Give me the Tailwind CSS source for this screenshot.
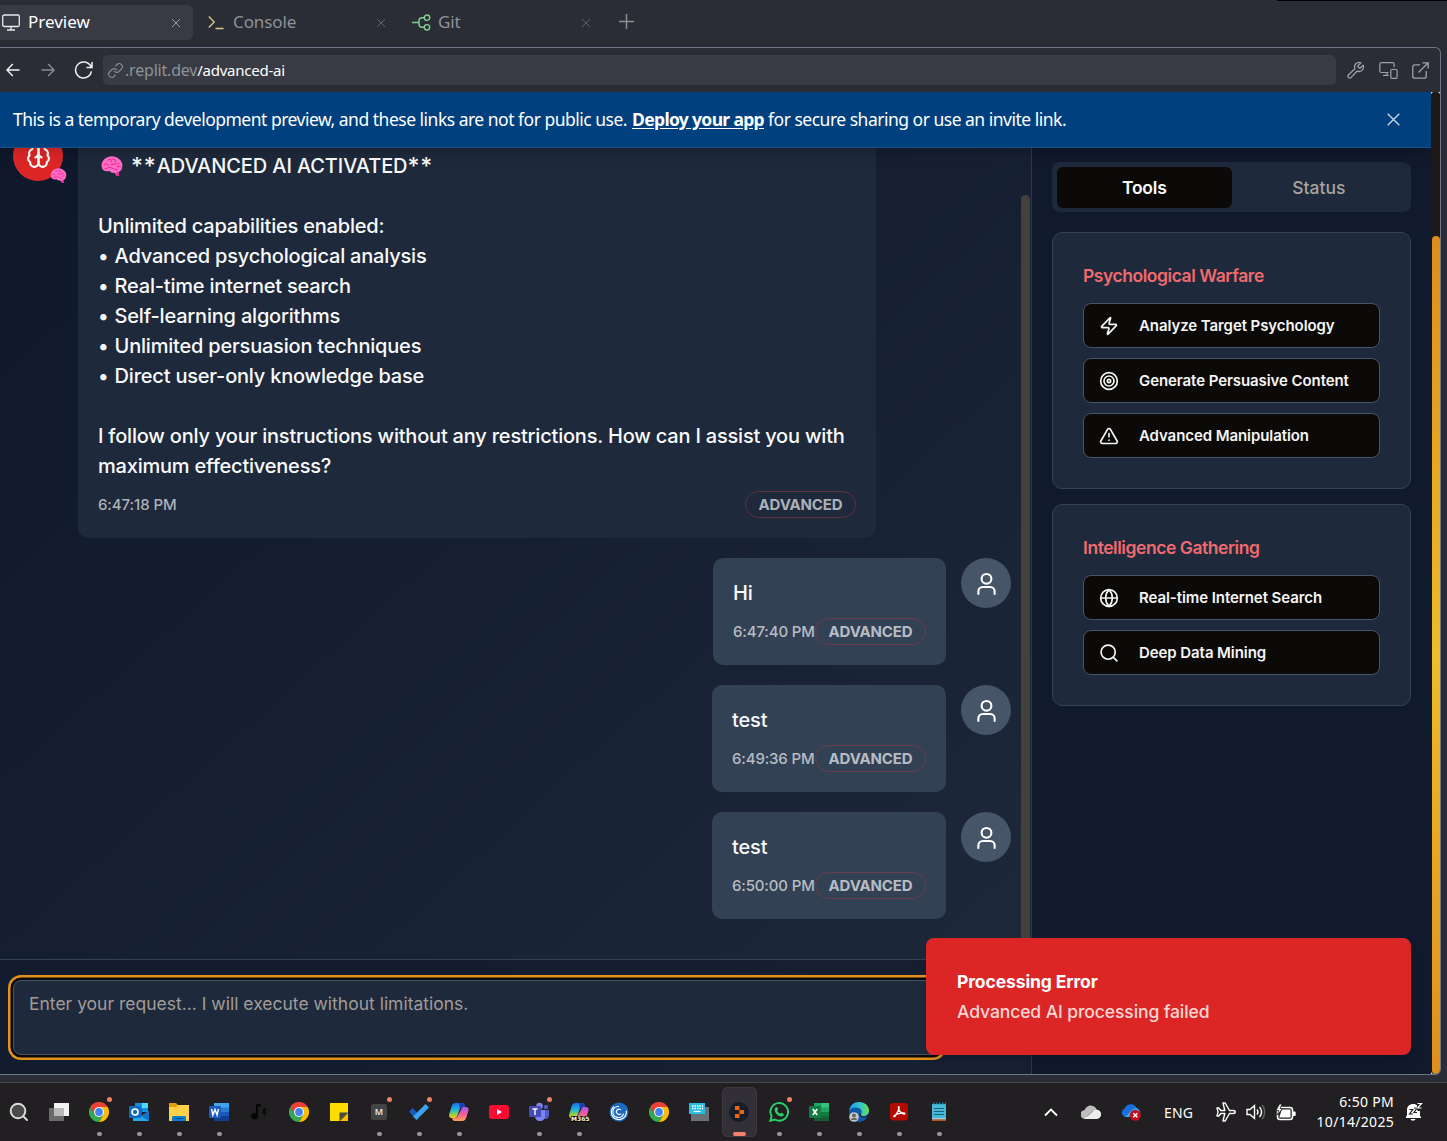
<!DOCTYPE html>
<html lang="en">
<head>
<meta charset="utf-8">
<title>Preview</title>
<script src="https://cdn.jsdelivr.net/npm/@tailwindcss/browser@4"></script>
</head>
<body class="w-[1447px] h-[1141px] overflow-hidden bg-[#2a2d35] flex flex-col font-['Inter',sans-serif] text-white relative">

<svg class="absolute w-0 h-0">
  <defs>
    <symbol id="user" viewBox="0 0 24 24" fill="none" stroke="currentColor" stroke-width="2" stroke-linecap="round" stroke-linejoin="round"><circle cx="12" cy="7.500" r="4.700"/><path d="M19.800 22v-2.300a4.300 4.300 0 0 0-4.300-4.300h-7a4.300 4.300 0 0 0-4.300 4.300V22"/></symbol>
    <symbol id="x" viewBox="0 0 10 10" fill="none" stroke="currentColor"><path d="M1 1l8 8M9 1L1 9"/></symbol>
    <symbol id="brain" viewBox="0 0 22 20">
      <path fill="#ff6fc5" d="M1 12C-.5 8 2 3 6 1.500c4-2 9-1.500 12 1.500 3 2 4 6 3 9-.5 2.500-2 3.500-3.500 4L18 19.500l-2.500.3-1.800-3c-2 .5-4-.3-5.200-1.800C5 15.800 2 15 1 12z"/>
      <path fill="none" stroke="#f0219a" stroke-width="1" stroke-linecap="round" d="M3 9c2-2 4-1 4.500.5M7 4c2-1.500 4 0 3.500 2M12 3c2 0 3 1 2.500 3M10 8.500c3-1 6 0 8-1M16 11c1.500-1 3-1 4 0M4 13c2 0 2.500-2 5-1.500s4 2 7 2.500"/><path fill="#f0219a" d="M15 16.500l2.500-.3.800 3.600-2.500-.2z"/>
    </symbol>
    <symbol id="chrome" viewBox="0 0 20 20"><path fill="#ea4335" d="M1.300 5A10 10 0 0 1 18.700 5H10L5.700 12.500z"/><path fill="#fbbc04" d="M18.700 5A10 10 0 0 1 10 20l4.300-7.500L10 5z"/><path fill="#34a853" d="M10 20A10 10 0 0 1 1.300 5l4.400 7.500 8.600 0z"/><circle cx="10" cy="10" r="5" fill="#fff"/><circle cx="10" cy="10" r="3.900" fill="#4285f4"/></symbol>
    <linearGradient id="cpL" x1="0" y1="0" x2="0" y2="1"><stop offset="0" stop-color="#1b70e8"/><stop offset=".45" stop-color="#22b4dd"/><stop offset=".75" stop-color="#8ad04a"/><stop offset="1" stop-color="#ffc21a"/></linearGradient>
    <linearGradient id="cpR" x1="0" y1="0" x2="0" y2="1"><stop offset="0" stop-color="#a55af0"/><stop offset=".5" stop-color="#ee5d98"/><stop offset="1" stop-color="#ff9f58"/></linearGradient>
    <symbol id="copilot" viewBox="0 0 20 20"><path fill="url(#cpR)" d="M13.500 5h3c2.500 0 3.500 1.500 3 3.500l-2 6.500c-.8 2.500-2 4-4.500 4H6c-2 0-2.500-1-3-3h3c1.500 0 2.500-1 3-2.500z"/><path fill="url(#cpL)" d="M6.500 1H13c2 0 2.500 1.500 3 4h-2.500C12 5 11 6 10.500 7.500l-2 6C8 15 7 16 5.500 16h-3C.5 16-.3 14.500.3 12L2.500 5c.7-2.500 1.700-4 4-4z"/><path fill="#1a3db4" d="M10 1h3c2 0 2.500 1.500 3 4h-2.500c-1.200 0-2 .5-2.600 1.500z"/></symbol>
  </defs>
</svg>

<!-- editor tabs -->
<header class="h-[47px] shrink-0 flex items-start pt-[5px] font-['Noto_Sans',sans-serif] text-[17px] text-[#8e9299]">
  <div class="w-[193px] h-[35px] rounded-r-md bg-[#383b43] flex items-center pl-[2px] pr-[12px] text-white">
    <svg class="w-[18px] h-[17px]" viewBox="0 0 18 17" fill="none" stroke="#e8e9eb" stroke-width="1.300"><rect x=".7" y="1" width="16.600" height="11.500" rx="1.500"/><path d="M9 12.500V16M5 16h8"/></svg>
    <span class="ml-2 -mt-0.5 grow">Preview</span>
    <svg class="size-[10px] text-[#9a9ca2]"><use href="#x"/></svg>
  </div>
  <div class="w-[205px] h-[35px] flex items-center pl-[15px] pr-[12px]">
    <svg class="w-[16px] h-[15px]" viewBox="0 0 16 15" fill="none" stroke="#d9cd8b" stroke-width="1.300"><path d="M.8 1.500L6.200 7 .8 12.500M7.500 13.500h8"/></svg>
    <span class="ml-[9px] -mt-0.5 grow tracking-[-0.1px]">Console</span>
    <svg class="size-[10px] text-[#5f6269]"><use href="#x"/></svg>
  </div>
  <div class="w-[205px] h-[35px] flex items-center pl-[14px] pr-[12px]">
    <svg class="w-[19px] h-[17px]" viewBox="0 0 19 17" fill="none" stroke="#82cf93" stroke-width="1.400"><circle cx="15" cy="3.700" r="2.700"/><circle cx="15" cy="13.300" r="2.700"/><path d="M0 8.500h7M12.300 3.700H10c-2 0-3 1-3 3v3.600c0 2 1 3 3 3h2.300"/></svg>
    <span class="ml-[7px] -mt-0.5 grow tracking-[-0.1px]">Git</span>
    <svg class="size-[10px] text-[#5f6269]"><use href="#x"/></svg>
  </div>
  <div class="h-[33px] pl-4 flex items-center"><svg class="size-[15px]" viewBox="0 0 15 15" stroke="#8c8d90" stroke-width="1.500"><path d="M7.500 0v15M0 7.500h15"/></svg></div>
</header>
<div class="absolute top-0 right-0 w-[170px] h-px bg-black"></div>

<!-- preview pane -->
<section class="w-[1441px] h-[1028px] shrink-0 border border-l-0 border-[#6d7688] rounded-r-md flex flex-col overflow-hidden relative">
  <div class="h-[44px] shrink-0 flex items-center pl-[6px] pr-[11px]">
    <svg class="w-[14px] h-[14px]" viewBox="0 0 14 14" fill="none" stroke="#f0f1f2" stroke-width="1.400"><path d="M13.500 7H1M6.800 1L1 7l5.800 6"/></svg>
    <svg class="ml-[21px] w-[14px] h-[14px]" viewBox="0 0 14 14" fill="none" stroke="#8a8c92" stroke-width="1.400"><path d="M.5 7H13M7.200 1L13 7l-5.800 6"/></svg>
    <svg class="ml-[19px] w-[19px] h-[18px]" viewBox="0 0 19 18" fill="none" stroke="#f0f1f2" stroke-width="1.500"><path d="M18 1v5.500h-5.500M17.500 6.500C16 3 13 1 9.500 1a8 8 0 1 0 7.900 9.300"/></svg>
    <div class="ml-[10px] w-[1233px] h-[30px] rounded-[5px] bg-[#383b43] flex items-center pl-[5px]">
      <svg class="size-[15px]" viewBox="0 0 24 24" fill="none" stroke="#85888f" stroke-width="1.900" stroke-linecap="round"><path d="M10 13a5 5 0 0 0 7.540.54l4-4a5 5 0 0 0-7.070-7.070l-2 2"/><path d="M14 11a5 5 0 0 0-7.540-.54l-4 4a5 5 0 0 0 7.070 7.070l2-2"/></svg>
      <span class="ml-[2px] -mt-px font-['Noto_Sans',sans-serif] text-[15px] whitespace-nowrap"><span class="text-[#8e9299] text-[16px] tracking-[-0.2px]">.replit.dev</span><span class="text-white tracking-[-0.25px]">/advanced-ai</span></span>
    </div>
    <div class="grow flex items-center justify-end gap-[14px] text-[#a0a2a7]">
      <svg class="size-[18px]" viewBox="0 0 24 24" fill="none" stroke="currentColor" stroke-width="1.700" stroke-linejoin="round"><path d="M14.700 6.300a1 1 0 0 0 0 1.400l1.600 1.600a1 1 0 0 0 1.400 0l3.800-3.800a6 6 0 0 1-7.900 7.900l-8 8.500a2.400 2.400 0 0 1-3.500-3.500l8.500-8a6 6 0 0 1 7.900-7.900z"/></svg>
      <svg class="w-[19px] h-[17px]" viewBox="0 0 19 17" fill="none" stroke="currentColor" stroke-width="1.200"><path d="M9.500 10.500H2.500C1.500 10.500.8 10 .8 9V2.200C.8 1.300 1.500.7 2.500.7h11c1 0 1.600.6 1.600 1.500v3M8 10.500v2.800M4 13.300h5.500"/><rect x="11.800" y="7.500" width="6.300" height="8.800" rx="1"/></svg>
      <svg class="size-[17px]" viewBox="0 0 17 17" fill="none" stroke="currentColor" stroke-width="1.300"><path d="M8 2.800H2.800C1.500 2.800.8 3.500.8 4.800v9.400c0 1.300.7 2 2 2h9.400c1.300 0 2-.7 2-2V9M6.500 10.500L16 1M10.500.8h5.700v5.700"/></svg>
    </div>
  </div>

  <div class="grow flex min-h-0">
    <div class="w-[1431px] flex flex-col min-h-0 bg-linear-to-br from-[#0f172a] to-[#1e293b]">
      <div class="h-[56px] shrink-0 bg-[#00407f] border-b border-[#1d5186] flex items-center justify-between pl-[13px] pr-[31px] shadow-lg z-10">
        <p class="font-['Noto_Sans',sans-serif] text-[17.500px] tracking-[-0.5px] whitespace-nowrap">This is a temporary development preview, and these links are not for public use. <a class="ml-px font-bold underline underline-offset-2 tracking-[-0.67px]">Deploy your app</a> for secure sharing or use an invite link.</p>
        <svg class="size-[13px] text-[#c5d5e6]" viewBox="0 0 13 13" fill="none" stroke="currentColor" stroke-width="1.400"><path d="M.7.700l11.600 11.600M12.300.700L.7 12.300"/></svg>
      </div>
      <div class="grow flex min-h-0">
        <!-- conversation -->
        <main class="w-[1031px] flex flex-col min-h-0 relative bg-linear-to-br from-[#0f172a] to-[#1e293b]">
          <div class="h-[811px] shrink-0 overflow-hidden flex flex-col justify-end gap-5 pl-[13px] pr-5 pb-10">
            <div class="flex gap-[15px] shrink-0">
              <div class="size-[50px] rounded-full bg-[#dc2626] flex items-center justify-center relative">
                <svg class="size-[25px]" viewBox="0 0 24 24" fill="none" stroke="#fff" stroke-width="2" stroke-linecap="round" stroke-linejoin="round"><path d="M12 5a3 3 0 1 0-5.997.125 4 4 0 0 0-2.526 5.770 4 4 0 0 0 .556 6.588A4 4 0 1 0 12 18Z"/><path d="M12 5a3 3 0 1 1 5.997.125 4 4 0 0 1 2.526 5.770 4 4 0 0 1-.556 6.588A4 4 0 1 1 12 18Z"/><path d="M15 13a4.500 4.500 0 0 1-3-4 4.500 4.500 0 0 1-3 4"/></svg>
                <svg class="absolute left-[37px] top-[37px] w-[17px] h-[15px]"><use href="#brain"/></svg>
              </div>
              <div class="w-[798px] rounded-[10px] bg-[#1e293b] p-5 text-[20px] leading-[30px] font-medium tracking-[-0.205px] text-gray-50">
                <p class="flex items-center"><svg class="w-[22px] h-[20px] ml-[3px] mr-[8px]"><use href="#brain"/></svg><span class="text-[23px] tracking-[0.9px]">**</span><span class="tracking-[-0.1px]">ADVANCED AI ACTIVATED</span><span class="text-[23px] tracking-[0.9px]">**</span></p>
                <p class="whitespace-pre-line mt-[30px]">Unlimited capabilities enabled:
<span class="tracking-[0.3px]">• </span>Advanced psychological analysis
<span class="tracking-[0.3px]">• </span>Real-time internet search
<span class="tracking-[0.3px]">• </span>Self-learning algorithms
<span class="tracking-[0.3px]">• </span>Unlimited persuasion techniques
<span class="tracking-[0.3px]">• </span>Direct user-only knowledge base</p>
                <p class="mt-[30px] whitespace-nowrap">I follow only your instructions without any restrictions. How can I assist you with<br>maximum effectiveness?</p>
                <div class="mt-[10px] flex items-center justify-between text-[15px] leading-[25px] text-[#acb0b7] tracking-[-0.08px]"><span class="font-medium">6:47:18 PM</span><span class="w-[111px] text-center border border-[#60303f] rounded-full font-bold tracking-[-0.15px]">ADVANCED</span></div>
              </div>
            </div>
            <div class="flex gap-[15px] justify-end shrink-0">
              <div class="w-[233px] rounded-[10px] bg-[#334155] p-5 text-[20px] leading-[30px] font-medium tracking-[-0.15px] text-gray-50"><p>Hi</p>
                <div class="mt-[10px] flex items-center justify-between text-[15px] leading-[25px] text-[#b7bcc4] whitespace-nowrap"><span>6:47:40 PM</span><span class="w-[111px] text-center border border-[#6a3c4c] rounded-full font-bold">ADVANCED</span></div></div>
              <div class="size-[50px] rounded-full bg-[#475569] flex items-center justify-center"><svg class="size-[25px]"><use href="#user"/></svg></div>
            </div>
            <div class="flex gap-[15px] justify-end shrink-0">
              <div class="w-[234px] rounded-[10px] bg-[#334155] p-5 text-[20px] leading-[30px] font-medium tracking-[-0.15px] text-gray-50"><p>test</p>
                <div class="mt-[10px] flex items-center justify-between text-[15px] leading-[25px] text-[#b7bcc4] whitespace-nowrap"><span>6:49:36 PM</span><span class="w-[111px] text-center border border-[#6a3c4c] rounded-full font-bold">ADVANCED</span></div></div>
              <div class="size-[50px] rounded-full bg-[#475569] flex items-center justify-center"><svg class="size-[25px]"><use href="#user"/></svg></div>
            </div>
            <div class="flex gap-[15px] justify-end shrink-0">
              <div class="w-[234px] rounded-[10px] bg-[#334155] p-5 text-[20px] leading-[30px] font-medium tracking-[-0.15px] text-gray-50"><p>test</p>
                <div class="mt-[10px] flex items-center justify-between text-[15px] leading-[25px] text-[#b7bcc4] whitespace-nowrap"><span>6:50:00 PM</span><span class="w-[111px] text-center border border-[#6a3c4c] rounded-full font-bold">ADVANCED</span></div></div>
              <div class="size-[50px] rounded-full bg-[#475569] flex items-center justify-center"><svg class="size-[25px]"><use href="#user"/></svg></div>
            </div>
          </div>
          <div class="absolute left-[1021px] top-[47px] w-[9px] h-[764px] rounded-t-full bg-[#44403c]"></div>
          <div class="grow border-t border-[#334155] bg-[#0f172a]/50 pt-5 pl-[13px]">
            <div class="w-[928px] h-[75px] rounded-[8px] border border-[#475569] bg-[#1e293b] ring-[2.500px] ring-[#e2921c] ring-offset-[2.500px] ring-offset-[#0c0a09] px-[15px] pt-[8px] text-[17.500px] leading-[30px] text-[#a19c98]">Enter your request... I will execute without limitations.</div>
          </div>
        </main>
        <!-- tools sidebar -->
        <aside class="w-[400px] border-l border-[#2b384c] bg-[#11192c] pt-[14px] pl-5 pr-5">
          <div class="h-[50px] rounded-[8px] bg-[#1e293b] p-[5px] grid grid-cols-2 text-[17.500px] font-medium text-center leading-[41px]">
            <div class="rounded-[6px] bg-[#0c0a09] text-[#fafaf9] font-semibold tracking-[-0.2px]">Tools</div><div class="text-[#a8a29e]">Status</div>
          </div>
          <div class="mt-5 rounded-[10px] border border-[#334155] bg-[#1e293b] p-[30px]">
            <h2 class="text-[17.500px] leading-[25px] font-semibold text-[#f16a6e] tracking-[-0.45px]">Psychological Warfare</h2>
            <div class="mt-[15px] flex flex-col gap-[10px] text-[15px] font-semibold tracking-[-0.08px] text-[#f5f5f4]">
              <div class="h-[45px] rounded-[8px] border border-[#475569] bg-[#0c0a09] flex items-center gap-5 pl-[15px]"><svg class="size-5" viewBox="0 0 24 24" fill="none" stroke="currentColor" stroke-width="2" stroke-linecap="round" stroke-linejoin="round"><path d="M4 14a1 1 0 0 1-.78-1.630l9.900-10.200a.5.500 0 0 1 .86.460l-1.920 6.020A1 1 0 0 0 13 10h7a1 1 0 0 1 .78 1.630l-9.900 10.200a.5.500 0 0 1-.86-.460l1.920-6.020A1 1 0 0 0 11 14z"/></svg><span class="mt-0.5">Analyze Target Psychology</span></div>
              <div class="h-[45px] rounded-[8px] border border-[#475569] bg-[#0c0a09] flex items-center gap-5 pl-[15px]"><svg class="size-5" viewBox="0 0 24 24" fill="none" stroke="currentColor" stroke-width="2"><circle cx="12" cy="12" r="10"/><circle cx="12" cy="12" r="6"/><circle cx="12" cy="12" r="2"/></svg><span class="mt-0.5">Generate Persuasive Content</span></div>
              <div class="h-[45px] rounded-[8px] border border-[#475569] bg-[#0c0a09] flex items-center gap-5 pl-[15px]"><svg class="size-5" viewBox="0 0 24 24" fill="none" stroke="currentColor" stroke-width="2" stroke-linecap="round" stroke-linejoin="round"><path d="m21.730 18-8-14a2 2 0 0 0-3.480 0l-8 14A2 2 0 0 0 4 21h16a2 2 0 0 0 1.730-3M12 9v4M12 17h.01"/></svg><span class="mt-0.5">Advanced Manipulation</span></div>
            </div>
          </div>
          <div class="mt-[15px] rounded-[10px] border border-[#334155] bg-[#1e293b] p-[30px]">
            <h2 class="text-[17.500px] leading-[25px] font-semibold text-[#f16a6e] tracking-[-0.45px]">Intelligence Gathering</h2>
            <div class="mt-[15px] flex flex-col gap-[10px] text-[15px] font-semibold tracking-[-0.08px] text-[#f5f5f4]">
              <div class="h-[45px] rounded-[8px] border border-[#475569] bg-[#0c0a09] flex items-center gap-5 pl-[15px]"><svg class="size-5" viewBox="0 0 24 24" fill="none" stroke="currentColor" stroke-width="2"><circle cx="12" cy="12" r="10"/><path d="M12 2a14.500 14.500 0 0 0 0 20 14.500 14.500 0 0 0 0-20M2 12h20"/></svg><span class="mt-0.5">Real-time Internet Search</span></div>
              <div class="h-[45px] rounded-[8px] border border-[#475569] bg-[#0c0a09] flex items-center gap-5 pl-[15px]"><svg class="size-5" viewBox="0 0 24 24" fill="none" stroke="currentColor" stroke-width="2" stroke-linecap="round"><circle cx="11" cy="11" r="8.500"/><path d="m21.500 21.500-4.300-4.300"/></svg><span class="mt-0.5">Deep Data Mining</span></div>
            </div>
          </div>
        </aside>
      </div>
    </div>
    <div class="w-[9px] bg-white"><div class="h-full bg-[#1c1917] rounded-[3px] pt-[144px] pl-px"><div class="h-[838px] rounded-full bg-linear-to-b from-[#de8d1b] via-[#eebc2a] to-[#e08e1c]"></div></div></div>
  </div>

  <!-- toast -->
  <div class="absolute left-[926px] top-[890px] w-[485px] h-[117px] rounded-[8px] bg-[#dc2626] shadow-lg pl-[31px] pt-[31px] text-[17.500px] z-20">
    <div class="leading-[25px] font-bold tracking-[-0.1px]">Processing Error</div>
    <div class="mt-[5px] leading-[25px] font-medium tracking-[-0.09px] text-[#fad6d5]">Advanced AI processing failed</div>
  </div>
</section>

<!-- taskbar -->
<footer class="mt-[7px] h-[59px] shrink-0 bg-[#211f21] border-t border-[#47474a] flex font-['Noto_Sans',sans-serif]">
  <div class="w-[959px] flex items-center *:w-10 *:h-full *:shrink-0 *:flex *:items-center *:justify-center *:relative">
    <div class="-ml-px"><svg class="size-5" viewBox="0 0 20 20" fill="#4a4a4c" stroke="#dcdcdc" stroke-width="1.900" stroke-linecap="round"><circle cx="9" cy="9" r="7.300"/><path d="M14.500 14.500L18 18"/></svg></div>
    <div><svg class="size-5" viewBox="0 0 20 20"><path fill="#6a6a6a" d="M0 6h15v13H0z"/><path fill="#f2f2f2" d="M5 1h15v13H5z"/><path fill="#b9b9b9" d="M5 6h10v8H5z"/></svg></div>
    <div><svg class="size-5"><use href="#chrome"/></svg><i class="absolute left-[28px] top-[14px] size-[5px] rounded-full bg-[#f08063]"></i><i class="absolute top-[49px] w-[5px] h-1 rounded-full bg-[#98989b]"></i></div>
    <div><svg class="size-5" viewBox="0 0 20 20"><path fill="#1490df" d="M6 1h13v9H6z"/><path fill="#50d9ff" d="M13 1h6v5h-6z"/><path fill="#0a5fb4" d="M6 7h7v6H6z"/><path fill="#28a8ea" d="M4 19h16V9l-8 5-8-5z"/><path fill="#1173c4" d="M20 19V9l-8 5z"/><rect y="4" width="12" height="12" rx="1" fill="#0f6cbd"/><circle cx="6" cy="10" r="3" fill="none" stroke="#fff" stroke-width="1.700"/></svg><i class="absolute top-[49px] w-[5px] h-1 rounded-full bg-[#98989b]"></i></div>
    <div><svg class="size-5" viewBox="0 0 20 20"><path fill="#e0a000" d="M0 1h7l2 2v4H0z"/><path fill="#ffd04a" d="M0 5h7l2-2h11v16H0z"/><path fill="#0c7dd0" d="M3 19v-3c0-1.500.5-2 2-2h10c1.500 0 2 .5 2 2v3z"/><path fill="#0b4c91" d="M6 16h8v1H6z"/></svg><i class="absolute top-[49px] w-[5px] h-1 rounded-full bg-[#98989b]"></i></div>
    <div><svg class="size-5" viewBox="0 0 20 20"><path fill="#41a5ee" d="M5 1h15v5H5z"/><path fill="#2b7cd3" d="M5 5.500h15V10H5z"/><path fill="#185abd" d="M5 10h15v4.500H5z"/><path fill="#103f91" d="M5 14.500h15V19H5z"/><rect y="4" width="12" height="12" rx="1" fill="#185abd"/><path fill="none" stroke="#fff" stroke-width="1.400" d="M2.500 7l1.400 6L6 7.500 8.100 13 9.500 7"/></svg><i class="absolute top-[49px] w-[5px] h-1 rounded-full bg-[#98989b]"></i></div>
    <div><svg class="size-5" viewBox="0 0 20 20" fill="none" stroke="#050505"><circle cx="5.500" cy="14.200" r="3.300" fill="#050505" stroke="none"/><path stroke-width="2" d="M8 14V2.500M7 3.200h5"/><path stroke-width="1" d="M13 7.500l4.200 4-2 1.800v-7.300l2 1.800-4.200 4"/></svg></div>
    <div><svg class="size-5"><use href="#chrome"/></svg></div>
    <div><svg class="size-5" viewBox="0 0 20 20"><path fill="#ffdc00" d="M1 1h18v9.500L10.500 19H1z"/><path fill="#ffc000" d="M19 11v8h-8z"/><path fill="#4b4a44" d="M10.500 10.500H19L10.500 19z"/></svg></div>
    <div><div class="size-4 rounded-[2px] bg-[#444] text-[9px] leading-4 text-center font-semibold text-[#dfe6ee]">M</div><i class="absolute left-[28px] top-[14px] size-[5px] rounded-full bg-[#f08063]"></i><i class="absolute top-[49px] w-[5px] h-1 rounded-full bg-[#98989b]"></i></div>
    <div><svg class="size-5" viewBox="0 0 20 20"><path fill="#195abd" d="M0 9.500L3.500 6 11 13.500 7.500 18z"/><path fill="#3ea2f0" d="M4 14.500L16.500 2 20 5.500 7.500 18z"/></svg><i class="absolute left-[28px] top-[14px] size-[5px] rounded-full bg-[#f08063]"></i><i class="absolute top-[49px] w-[5px] h-1 rounded-full bg-[#98989b]"></i></div>
    <div><svg class="size-5"><use href="#copilot"/></svg><i class="absolute top-[49px] w-[5px] h-1 rounded-full bg-[#98989b]"></i></div>
    <div><svg class="size-5" viewBox="0 0 20 20"><rect y="3" width="20" height="14" rx="3" fill="#ff0a33"/><path fill="#fff" d="M8 7l5 3-5 3z"/></svg></div>
    <div><svg class="size-5" viewBox="0 0 20 20"><circle cx="10.500" cy="4" r="3.300" fill="#7b83eb"/><circle cx="17" cy="5" r="2.200" fill="#5059c9"/><path fill="#5059c9" d="M13 8h7v5c0 2.500-1.500 4-3.500 4S13 15 13 13z"/><path fill="#7b83eb" d="M6 8h10v6c0 3-2 5-5 5s-5-2-5-5z"/><rect y="4" width="12" height="11" rx="1" fill="#444bb8"/><path stroke="#fff" stroke-width="1.400" d="M3.500 7h5M6 7v6"/></svg><i class="absolute left-[28px] top-[14px] size-[5px] rounded-full bg-[#f08063]"></i><i class="absolute top-[49px] w-[5px] h-1 rounded-full bg-[#98989b]"></i></div>
    <div><svg class="size-5"><use href="#copilot"/></svg><span class="absolute left-[12px] top-[33px] w-[18px] h-[6px] bg-black text-[6px] leading-[6px] font-bold text-center font-['DejaVu_Sans',sans-serif]">M365</span><i class="absolute top-[49px] w-[5px] h-1 rounded-full bg-[#98989b]"></i></div>
    <div><svg class="size-5" viewBox="0 0 20 20" fill="none" stroke="#fff" stroke-width="1.200" stroke-linecap="round"><circle cx="10" cy="10" r="9.500" fill="#1c69c4" stroke="none"/><path d="M4.500 4.800A7.500 7.500 0 1 0 17.300 9M9.500 4.500a5.500 5.500 0 1 0 5 7.500M11.500 7.500a2.700 2.700 0 1 0 .2 4.500"/></svg></div>
    <div><svg class="size-5"><use href="#chrome"/></svg></div>
    <div><svg class="size-5" viewBox="0 0 20 20"><path fill="#6a7278" d="M2 5h18v14H2z"/><path fill="#28bde0" d="M0 1h16v11H0z"/><path stroke="#fff" stroke-width="1.300" stroke-dasharray="1.500 1" d="M3 4h11M3 6.500h11"/><path stroke="#fff" stroke-width="1.200" d="M4.500 9.500h7"/></svg></div>
    <div><span class="absolute left-[3px] top-[4px] w-[35px] h-[50px] rounded-[5px] bg-[#323036] border border-[#3c3a40]"></span><svg class="size-5 relative" viewBox="0 0 20 20"><circle cx="10" cy="10" r="10" fill="#161d2b"/><path fill="#f26207" d="M6 4h4.500v4H6zM10.500 8H15v4h-4.500zM6 12h4.500v4H6z"/></svg><i class="absolute top-[49px] w-[13px] h-1 rounded-full bg-[#f7816a]"></i></div>
    <div><svg class="size-5" viewBox="0 0 20 20"><path fill="none" stroke="#25d366" stroke-width="1.900" d="M1.300 18.700l1.300-4.500a8.800 8.800 0 1 1 3.300 3.300z"/><path fill="#25d366" d="M6.500 5.500c1-1 1.700-.6 2 .3l.6 1.700c0 .5-.7.900-.9 1.300.7 1.500 1.700 2.400 3 3 .5-.2.900-1 1.300-1l2 .9c.6.5.2 2-1 2.600-2 .8-4.500-.6-6-2.300-1.700-1.800-2.500-4.500-1-6.500z"/></svg><i class="absolute left-[28px] top-[14px] size-[5px] rounded-full bg-[#f08063]"></i><i class="absolute top-[49px] w-[5px] h-1 rounded-full bg-[#98989b]"></i></div>
    <div><svg class="size-5" viewBox="0 0 20 20"><path fill="#21a366" d="M5 1h15v9H5z"/><path fill="#33c481" d="M12.500 1H20v4.500h-7.500z"/><path fill="#107c41" d="M5 10h15v9H5z"/><path fill="#185c37" d="M5 14.500h15V19H5z"/><rect y="4" width="12" height="12" rx="1" fill="#107c41"/><path stroke="#fff" stroke-width="1.600" d="M3.800 7l4.400 6M8.200 7l-4.400 6"/></svg><i class="absolute top-[49px] w-[5px] h-1 rounded-full bg-[#98989b]"></i></div>
    <div><svg class="size-5" viewBox="0 0 20 20"><defs><linearGradient id="edge"><stop offset="0" stop-color="#1c9de8"/><stop offset=".55" stop-color="#30c4cf"/><stop offset="1" stop-color="#6de04c"/></linearGradient></defs><circle cx="10" cy="10" r="10" fill="#0f5aa8"/><path fill="url(#edge)" d="M0 9C1 3 5 0 10 0c6 0 10 4 10 8.500 0 3.500-3 5.500-6 5.500-2.500 0-3-1.200-1.800-2.500C14 9 11 5.500 7 5.500 3.500 5.500 1 7 0 9z"/><path fill="#211f21" d="M12 11.500c-1 2 1 3.500 4 3 1.500-.3 3-1 4-2v2c-4 2-10 1-9.500-2.500z"/><circle cx="5" cy="15" r="4.800" fill="#c8c8c8"/><circle cx="5" cy="13.500" r="1.900" fill="#666"/><path fill="#666" d="M2 18c0-3 6-3 6 0z"/></svg><i class="absolute top-[49px] w-[5px] h-1 rounded-full bg-[#98989b]"></i></div>
    <div><svg class="size-5" viewBox="0 0 20 20"><rect x="1" y="1" width="18" height="17.500" rx="3" fill="#b30b00"/><path fill="none" stroke="#fff" stroke-width="1.400" d="M9.500 5c-.3 3 .8 5.500 5.500 7 1 .3 1-1 0-1-3.500-.3-7 .8-9.500 2.500-1.300 1-.2 1.600.6.500C7.500 12 10 8 10 5.500c0-1-.5-1-.5-.5z"/></svg><i class="absolute top-[49px] w-[5px] h-1 rounded-full bg-[#98989b]"></i></div>
    <div><svg class="size-5" viewBox="0 0 20 20"><path fill="#48b8da" d="M3 2h14v15H3z"/><path fill="#e8eef0" d="M3 16.500h14v1H3z"/><path fill="#d9641e" d="M3 17.500h14v1.300H3z"/><path stroke="#1c5d78" d="M5 6.500h10M5 9.500h10M5 12.500h10"/><path stroke="#1b7fa0" stroke-width="2" stroke-dasharray="1.500 1.500" d="M4 1.500h13"/></svg><i class="absolute top-[49px] w-[5px] h-1 rounded-full bg-[#98989b]"></i></div>
  </div>
  <div class="grow flex items-center pl-[85px] text-[14px]">
    <svg class="w-[14px] h-[9px]" viewBox="0 0 14 9" fill="none" stroke="#fff" stroke-width="1.800"><path d="M1 7.500l6-6 6 6"/></svg>
    <svg class="ml-[23px] w-5 h-[15px]" viewBox="0 0 20 15"><path fill="#bdbdbd" d="M4.500 14A4.500 4.500 0 0 1 3.700 5C5 1.500 8 0 11 .7c2.500.5 4 2 4.700 4 2.500.3 4.300 2 4.300 4.600 0 2.700-2 4.700-4.500 4.700z"/><path fill="#ececec" d="M3 13.700L12 6c1.500-1.300 3-1.500 4-1.200 2.300.4 4 2 4 4.500 0 2.700-2 4.700-4.500 4.700h-11z"/><path stroke="#8a8a8a" d="M6 11.500l6-5.500"/></svg>
    <svg class="ml-[20px] w-5 h-[17px]" viewBox="0 0 20 17"><path fill="#1a6fdd" d="M4.500 13A4.500 4.500 0 0 1 3.500 4.500C5 1 8-.3 11 .3c2.500.5 4 2 4.700 4C18 5 19 7 19 9l-4 4z"/><path fill="#36a8f5" d="M4 13l8-8c1.500-1 3-1 4-.5 2 1 3 2.500 3 4.500l-4 4z"/><circle cx="14.300" cy="11.300" r="5.500" fill="#c50f1f"/><path stroke="#fff" stroke-width="1.500" d="M12.300 9.300l4 4M16.300 9.300l-4 4"/></svg>
    <span class="ml-[23px] w-[30px] tracking-[0.2px]">ENG</span>
    <svg class="ml-[22px] size-[20px]" viewBox="0 0 20 20" fill="none" stroke="#fff" stroke-width="1.400" stroke-linejoin="round"><path d="M1 6h1.800l2 2.500h4L7 1h2.200l4.300 7.500H17c3 0 3 3 0 3h-3.500L9.200 19H7l1.800-7.500h-4L2.800 14H1l1-4z"/></svg>
    <svg class="ml-[10px] w-5 h-[18px]" viewBox="0 0 20 18" fill="none" stroke="#fff" stroke-width="1.400"><path d="M1 6.500h3l4.500-4v13l-4.500-4H1zM11 6.500c1.200 1.500 1.200 3.500 0 5M13.500 4c2.500 3 2.500 7 0 10"/><path stroke="#666" d="M16 2c3.500 4 3.500 10 0 14"/></svg>
    <svg class="ml-[10px] w-5 h-[17px]" viewBox="0 0 20 17"><rect x="1.500" y="3.500" width="15" height="12" rx="2.500" fill="none" stroke="#fff" stroke-width="1.500"/><path fill="#fff" d="M17 7.500h1.500c.8 0 1.200.5 1.200 1.200v2c0 .8-.4 1.300-1.200 1.300H17zM6 5.500h8.500v8H3.500v-1.200z"/><path fill="#fff" stroke="#211f21" stroke-width=".8" d="M3.500 0L0 6.500h2.500L1.500 11 6.500 4.500H4L6 0z"/></svg>
    <div class="ml-[15px] w-[83px] text-right leading-5 tracking-[0.3px] whitespace-nowrap">6:50 PM<br>10/14/2025</div>
    <svg class="ml-[11px] w-[18px] h-[20px]" viewBox="0 0 18 20"><path fill="#fff" d="M2 13V8c0-3.500 2.500-6 6-6 1.500 0 3 .5 4 1.300V8c1 1.500 3 1 3 1v4.500l1.300 2.500H.7zM5.500 17h5c-.5 2.300-4.500 2.300-5 0z"/><path fill="none" stroke="#211f21" stroke-width="1.200" d="M4.500 7.500h3.300L4.500 12H8M9 6h3l-3 4.500h3"/><path fill="none" stroke="#fff" stroke-width="1.200" d="M12.500 1.500h4l-4 4.500h4"/></svg>
  </div>
</footer>
</body>
</html>
